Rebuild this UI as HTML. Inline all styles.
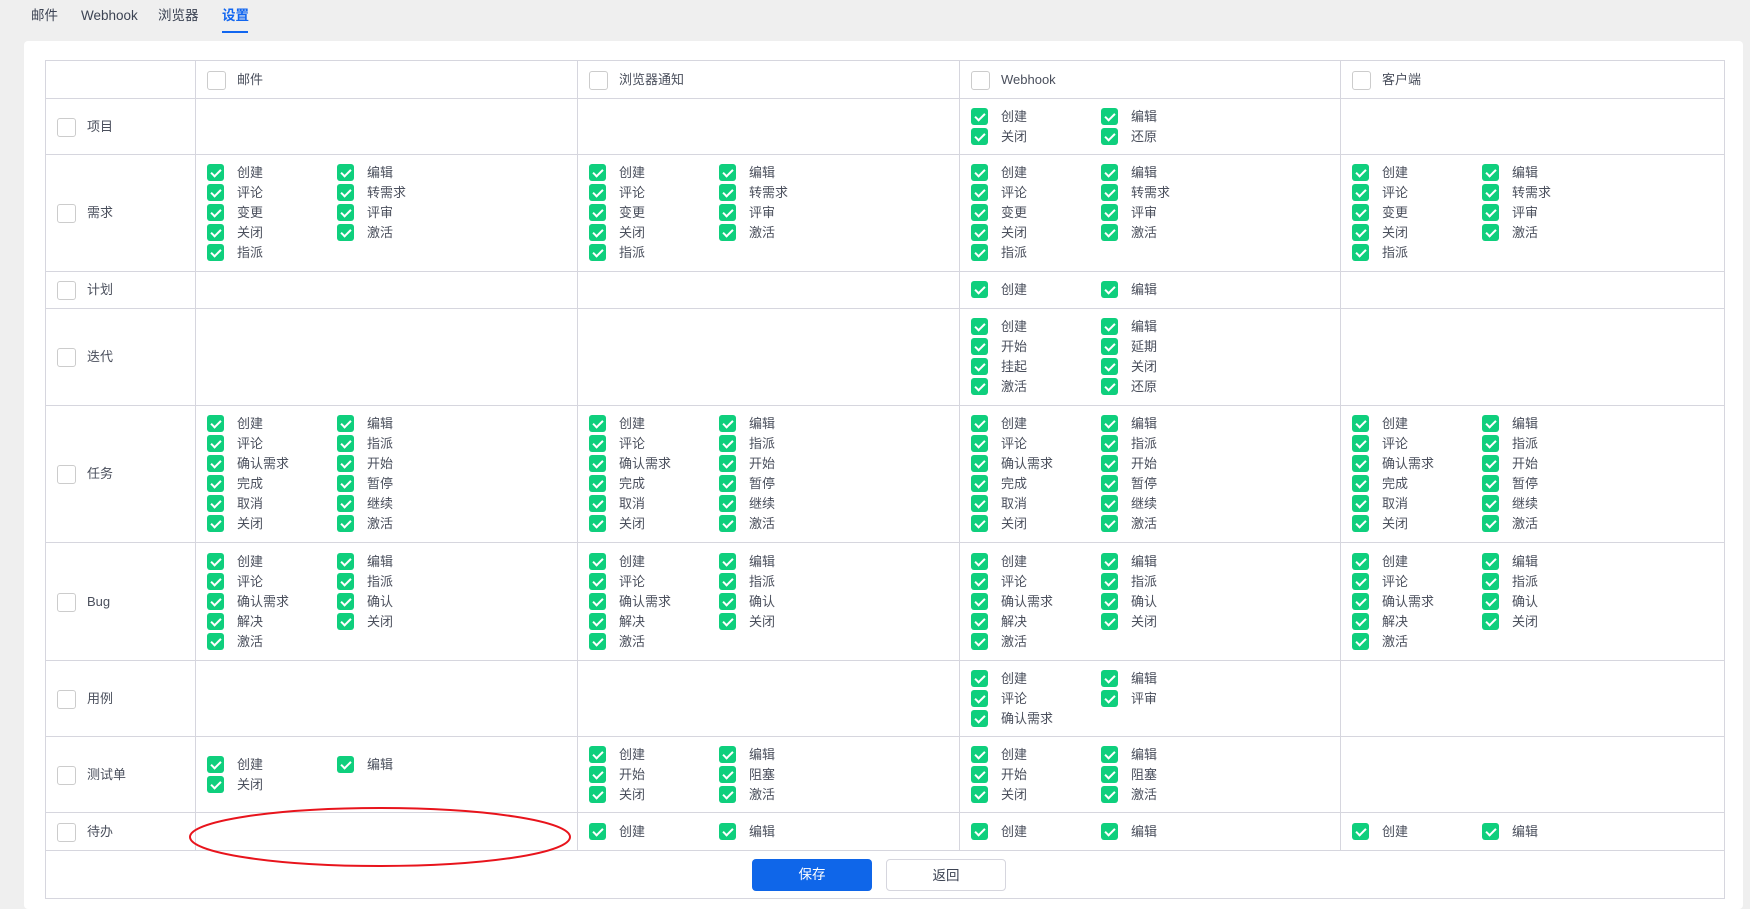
<!DOCTYPE html>
<html style="width:1750px;height:909px;overflow:hidden"><head><meta charset="utf-8">
<style>
*{box-sizing:border-box;margin:0;padding:0}
body{width:1750px;height:909px;background:#efefef;font-family:"Liberation Sans","Noto Sans CJK SC",sans-serif;font-size:13px;color:#4a4f5c;position:relative;overflow:hidden}
.tab{position:absolute;top:5px;height:22px;line-height:22px;font-size:13.5px;color:#3c4353}
.tab.on{color:#1166f0;font-weight:bold}
.ul{position:absolute;left:222px;top:31px;width:26px;height:2px;background:#1166f0}
.card{position:absolute;left:24px;top:41px;width:1719px;height:868px;background:#fff;border-radius:4px}
table{position:absolute;left:45px;top:60px;border-collapse:collapse;table-layout:fixed;width:1679px}
td{border:1px solid #d6d6de;vertical-align:middle;padding:0 0 0 11px}
.lb{position:relative;padding-left:30px;height:20px;line-height:20px;display:inline-block}
.lb::before{content:"";position:absolute;left:0;top:1px;width:17px;height:17px;border:1.5px solid #ccc;border-radius:3px;background:#fff}
.g{display:grid;grid-template-columns:130px 130px}
.it{position:relative;padding-left:30px;height:20px;line-height:20px}
.it::before{content:"";position:absolute;left:0;top:1px;width:17px;height:17px;border-radius:3px;background:#0fcf7d}
.it::after{content:"";position:absolute;left:6px;top:4px;width:4px;height:8px;border:solid #fff;border-width:0 2px 2px 0;transform:rotate(45deg)}
.btn{position:absolute;top:859px;height:32px;width:120px;border-radius:4px;text-align:center;line-height:32px;font-size:13.5px}
</style></head><body>
<div class="tab" style="left:31px">邮件</div>
<div class="tab" style="left:81px">Webhook</div>
<div class="tab" style="left:158px">浏览器</div>
<div class="tab on" style="left:222px">设置</div>
<div class="ul"></div>
<div class="card"></div>
<table>
<colgroup><col style="width:150px"><col style="width:382px"><col style="width:382px"><col style="width:381px"><col style="width:384px"></colgroup>
<tr style="height:38px"><td></td><td><span class="lb">邮件</span></td><td><span class="lb">浏览器通知</span></td><td><span class="lb">Webhook</span></td><td><span class="lb">客户端</span></td></tr>
<tr style="height:56px"><td><span class="lb">项目</span></td><td></td><td></td><td><div class="g"><div class="it">创建</div><div class="it">编辑</div><div class="it">关闭</div><div class="it">还原</div></div></td><td></td></tr>
<tr style="height:117px"><td><span class="lb">需求</span></td>
<td><div class="g"><div class="it">创建</div><div class="it">编辑</div><div class="it">评论</div><div class="it">转需求</div><div class="it">变更</div><div class="it">评审</div><div class="it">关闭</div><div class="it">激活</div><div class="it">指派</div></div></td>
<td><div class="g"><div class="it">创建</div><div class="it">编辑</div><div class="it">评论</div><div class="it">转需求</div><div class="it">变更</div><div class="it">评审</div><div class="it">关闭</div><div class="it">激活</div><div class="it">指派</div></div></td>
<td><div class="g"><div class="it">创建</div><div class="it">编辑</div><div class="it">评论</div><div class="it">转需求</div><div class="it">变更</div><div class="it">评审</div><div class="it">关闭</div><div class="it">激活</div><div class="it">指派</div></div></td>
<td><div class="g"><div class="it">创建</div><div class="it">编辑</div><div class="it">评论</div><div class="it">转需求</div><div class="it">变更</div><div class="it">评审</div><div class="it">关闭</div><div class="it">激活</div><div class="it">指派</div></div></td></tr>
<tr style="height:37px"><td><span class="lb">计划</span></td><td></td><td></td><td><div class="g"><div class="it">创建</div><div class="it">编辑</div></div></td><td></td></tr>
<tr style="height:97px"><td><span class="lb">迭代</span></td><td></td><td></td><td><div class="g"><div class="it">创建</div><div class="it">编辑</div><div class="it">开始</div><div class="it">延期</div><div class="it">挂起</div><div class="it">关闭</div><div class="it">激活</div><div class="it">还原</div></div></td><td></td></tr>
<tr style="height:137px"><td><span class="lb">任务</span></td>
<td><div class="g"><div class="it">创建</div><div class="it">编辑</div><div class="it">评论</div><div class="it">指派</div><div class="it">确认需求</div><div class="it">开始</div><div class="it">完成</div><div class="it">暂停</div><div class="it">取消</div><div class="it">继续</div><div class="it">关闭</div><div class="it">激活</div></div></td>
<td><div class="g"><div class="it">创建</div><div class="it">编辑</div><div class="it">评论</div><div class="it">指派</div><div class="it">确认需求</div><div class="it">开始</div><div class="it">完成</div><div class="it">暂停</div><div class="it">取消</div><div class="it">继续</div><div class="it">关闭</div><div class="it">激活</div></div></td>
<td><div class="g"><div class="it">创建</div><div class="it">编辑</div><div class="it">评论</div><div class="it">指派</div><div class="it">确认需求</div><div class="it">开始</div><div class="it">完成</div><div class="it">暂停</div><div class="it">取消</div><div class="it">继续</div><div class="it">关闭</div><div class="it">激活</div></div></td>
<td><div class="g"><div class="it">创建</div><div class="it">编辑</div><div class="it">评论</div><div class="it">指派</div><div class="it">确认需求</div><div class="it">开始</div><div class="it">完成</div><div class="it">暂停</div><div class="it">取消</div><div class="it">继续</div><div class="it">关闭</div><div class="it">激活</div></div></td></tr>
<tr style="height:118px"><td><span class="lb">Bug</span></td>
<td><div class="g"><div class="it">创建</div><div class="it">编辑</div><div class="it">评论</div><div class="it">指派</div><div class="it">确认需求</div><div class="it">确认</div><div class="it">解决</div><div class="it">关闭</div><div class="it">激活</div></div></td>
<td><div class="g"><div class="it">创建</div><div class="it">编辑</div><div class="it">评论</div><div class="it">指派</div><div class="it">确认需求</div><div class="it">确认</div><div class="it">解决</div><div class="it">关闭</div><div class="it">激活</div></div></td>
<td><div class="g"><div class="it">创建</div><div class="it">编辑</div><div class="it">评论</div><div class="it">指派</div><div class="it">确认需求</div><div class="it">确认</div><div class="it">解决</div><div class="it">关闭</div><div class="it">激活</div></div></td>
<td><div class="g"><div class="it">创建</div><div class="it">编辑</div><div class="it">评论</div><div class="it">指派</div><div class="it">确认需求</div><div class="it">确认</div><div class="it">解决</div><div class="it">关闭</div><div class="it">激活</div></div></td></tr>
<tr style="height:76px"><td><span class="lb">用例</span></td><td></td><td></td><td><div class="g"><div class="it">创建</div><div class="it">编辑</div><div class="it">评论</div><div class="it">评审</div><div class="it">确认需求</div></div></td><td></td></tr>
<tr style="height:76px"><td><span class="lb">测试单</span></td>
<td><div class="g"><div class="it">创建</div><div class="it">编辑</div><div class="it">关闭</div></div></td>
<td><div class="g"><div class="it">创建</div><div class="it">编辑</div><div class="it">开始</div><div class="it">阻塞</div><div class="it">关闭</div><div class="it">激活</div></div></td>
<td><div class="g"><div class="it">创建</div><div class="it">编辑</div><div class="it">开始</div><div class="it">阻塞</div><div class="it">关闭</div><div class="it">激活</div></div></td><td></td></tr>
<tr style="height:38px"><td><span class="lb">待办</span></td><td></td>
<td><div class="g"><div class="it">创建</div><div class="it">编辑</div></div></td>
<td><div class="g"><div class="it">创建</div><div class="it">编辑</div></div></td>
<td><div class="g"><div class="it">创建</div><div class="it">编辑</div></div></td></tr>
<tr style="height:48px"><td colspan="5"></td></tr>
</table>
<div class="btn" style="left:752px;background:#0f66e9;color:#fff">保存</div>
<div class="btn" style="left:886px;background:#fff;border:1px solid #d6d6de;color:#3c4353">返回</div>
<svg style="position:absolute;left:0;top:0" width="1750" height="909"><ellipse cx="380" cy="837" rx="190" ry="29" fill="none" stroke="#e8141c" stroke-width="2"/></svg>
</body></html>
